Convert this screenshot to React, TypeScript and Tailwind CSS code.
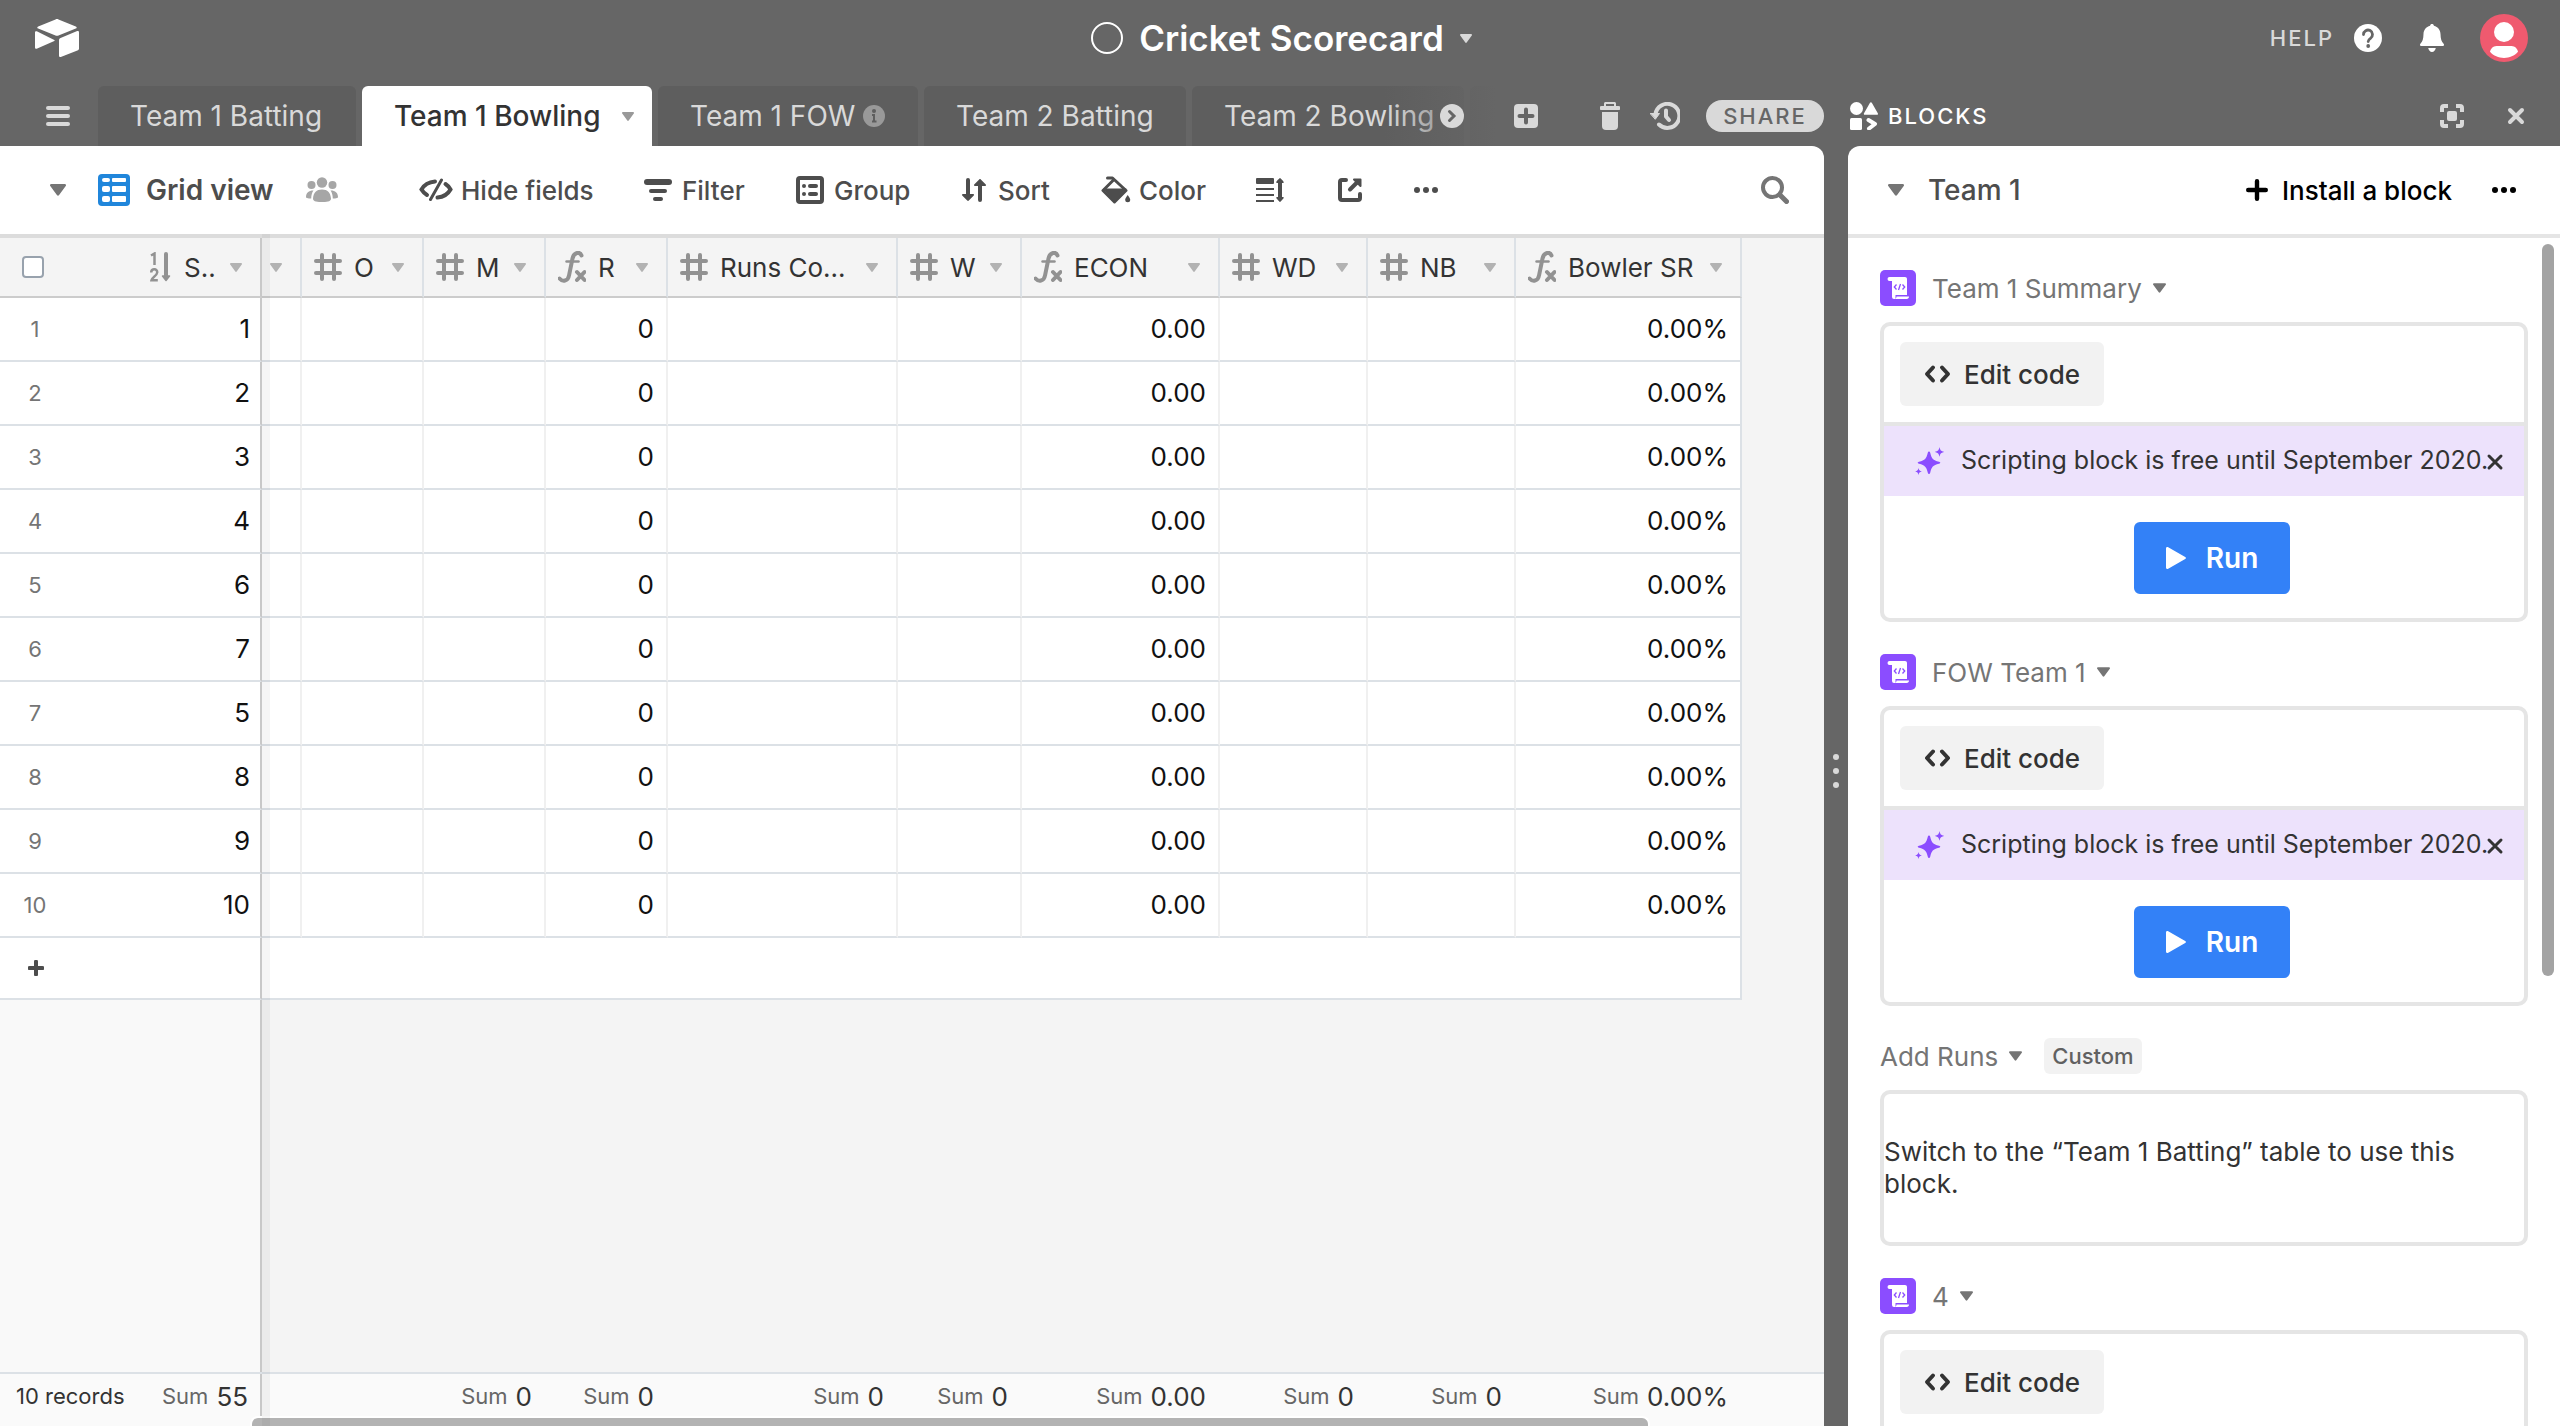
import React, { useState } from 'react'

type IconProps = { className?: string }

const TABS = [
  { name: 'Team 1 Batting', width: 'w-[258px]' },
  { name: 'Team 1 Bowling', width: 'w-[290px]' },
  { name: 'Team 1 FOW', width: 'w-[260px]', info: true },
  { name: 'Team 2 Batting', width: 'w-[262px]' },
  { name: 'Team 2 Bowling', width: 'w-[272px]' },
]

const COLUMNS = [
  { name: 'O', type: 'number', width: 'w-[122px]', value: '', sum: '' },
  { name: 'M', type: 'number', width: 'w-[122px]', value: '', sum: '0' },
  { name: 'R', type: 'formula', width: 'w-[122px]', value: '0', sum: '0' },
  { name: 'Runs Co...', type: 'number', width: 'w-[230px]', value: '', sum: '0' },
  { name: 'W', type: 'number', width: 'w-[124px]', value: '', sum: '0' },
  { name: 'ECON', type: 'formula', width: 'w-[198px]', value: '0.00', sum: '0.00' },
  { name: 'WD', type: 'number', width: 'w-[148px]', value: '', sum: '0' },
  { name: 'NB', type: 'number', width: 'w-[148px]', value: '', sum: '0' },
  { name: 'Bowler SR', type: 'formula', width: 'w-[226px]', value: '0.00%', sum: '0.00%' },
]

const RECORDS = [1, 2, 3, 4, 6, 7, 5, 8, 9, 10]

// ICONS

const Caret: React.FC<IconProps> = ({ className }) => (
  <svg viewBox="0 0 12 9" fill="currentColor" className={`shrink-0 ${className ?? ''}`}>
    <path d="M.9 0h10.2c.8 0 1.200.9.7 1.500L6.700 8.500c-.4.500-1 .5-1.400 0L.2 1.500C-.3.900.1 0 .9 0z" />
  </svg>
)

const Logo = () => (
  <svg width="44" height="38" viewBox="0 0 44 38" fill="#fff">
    <path d="M20.500.4 3.200 7.500c-1.200.5-1.200 1.600 0 2.100l17.300 6.900c1 .4 2 .4 3 0l17.300-6.900c1.200-.5 1.200-1.600 0-2.100L23.500.4c-1-.4-2-.4-3 0z" />
    <path d="M24 20.800v15.900c0 1 .9 1.500 1.800 1.200L43 31.200c.6-.3 1-.9 1-1.500V13.300c0-1-.9-1.500-1.800-1.200L25 19.300c-.6.300-1 .9-1 1.500z" />
    <path d="M19.300 20.900 1.800 12.300C.9 11.900 0 12.400 0 13.300v15.300c0 .9.900 1.500 1.700 1.100l17.600-7.800c.5-.2.500-.8 0-1z" />
  </svg>
)

const HelpIcon = () => (
  <svg width="28" height="28" viewBox="0 0 28 28">
    <circle cx="14" cy="14" r="14" fill="#fff" />
    <path d="M9.500 10.500a4.500 4.500 0 1 1 7 3.800c-1.500 1-2.300 1.700-2.300 3.200" fill="none" stroke="#666" strokeWidth="2.800" strokeLinecap="round" />
    <circle cx="14.200" cy="22" r="1.900" fill="#666" />
  </svg>
)

const BellIcon = () => (
  <svg width="24" height="28" viewBox="0 0 24 28" fill="#fff">
    <path d="M12 0c1.100 0 1.800.7 1.900 1.700C18 2.700 20.400 6 20.500 10c.1 5 1 7.600 3.100 9.800.9 1 .2 2.200-1 2.200H1.400c-1.200 0-1.900-1.200-1-2.200C2.500 17.600 3.400 15 3.500 10c.1-4 2.500-7.300 6.600-8.300C10.200.7 10.900 0 12 0zM8.200 24h7.600c-.4 2.300-1.900 4-3.800 4s-3.400-1.700-3.800-4z" />
  </svg>
)

const AvatarIcon = () => (
  <svg width="48" height="48" viewBox="0 0 48 48">
    <circle cx="24" cy="24" r="24" fill="#ef5a6f" />
    <circle cx="24" cy="18" r="10" fill="#fff" />
    <path d="M16.500 32h15c3.500 0 6 2.800 6.500 5.800C34.500 41.800 29.500 44 24 44s-10.500-2.200-14-6.200c.5-3 3-5.800 6.500-5.800z" fill="#fff" />
  </svg>
)

const InfoIcon = () => (
  <svg width="22" height="22" viewBox="0 0 22 22">
    <circle cx="11" cy="11" r="11" fill="#999" />
    <circle cx="11" cy="6" r="2" fill="#5e5e5e" />
    <path d="M9 10h2v6M9 16.500h4.500" fill="none" stroke="#5e5e5e" strokeWidth="2" />
  </svg>
)

const ChevronCircle = () => (
  <svg width="24" height="24" viewBox="0 0 24 24">
    <circle cx="12" cy="12" r="12" fill="#d9d9d9" />
    <path d="m9.500 7.500 4.500 4.500-4.500 4.500" fill="none" stroke="#666" strokeWidth="3" strokeLinecap="round" />
  </svg>
)

const AddTableIcon = () => (
  <svg width="24" height="24" viewBox="0 0 24 24">
    <rect width="24" height="24" rx="4" fill="#d9d9d9" />
    <path d="M12 5.500v13M5.500 12h13" stroke="#666" strokeWidth="4" strokeLinecap="round" />
  </svg>
)

const TrashIcon = () => (
  <svg width="20" height="28" viewBox="0 0 20 28" fill="#d9d9d9">
    <path d="M4 4V1.500C4 .7 4.700 0 5.500 0h9c.8 0 1.500.7 1.500 1.500V4h2.500a2 2 0 0 1 0 4h-17a2 2 0 0 1 0-4H4zm2 0h8V2H6v2z" />
    <path d="M2 10h16v14a4 4 0 0 1-4 4H6a4 4 0 0 1-4-4V10z" />
  </svg>
)

const HistoryIcon = () => (
  <svg width="30" height="28" viewBox="0 0 30 28" fill="none" stroke="#d9d9d9" strokeLinecap="round" strokeLinejoin="round">
    <path d="M5.500 12a12 12 0 1 1 3.500 10.500" strokeWidth="4" />
    <path d="M16 8.500v6l3 3.500" strokeWidth="4" />
    <path d="M0.500 11.500h9L5.500 17z" fill="#d9d9d9" strokeWidth="1" />
  </svg>
)

const BlocksIcon = () => (
  <svg width="28" height="28" viewBox="0 0 28 28" fill="#fff">
    <circle cx="6.500" cy="6.500" r="6.500" />
    <path d="M20 .8c.4-.8 1.400-.8 1.800 0l6 10.500c.4.800 0 1.500-.8 1.500H14.800c-.8 0-1.200-.7-.8-1.500z" />
    <rect y="16" width="12" height="12" rx="1.500" />
    <path d="m18.500 18 6.500 4-6 4.500" fill="none" stroke="#fff" strokeWidth="4" strokeLinecap="round" strokeLinejoin="round" />
  </svg>
)

const ExpandIcon = () => (
  <svg width="24" height="24" viewBox="0 0 24 24" fill="none" stroke="#d9d9d9">
    <path d="M2 8V4a2 2 0 0 1 2-2h4M16 2h4a2 2 0 0 1 2 2v4M22 16v4a2 2 0 0 1-2 2h-4M8 22H4a2 2 0 0 1-2-2v-4" strokeWidth="4" />
    <rect x="7" y="7" width="10" height="10" rx="2" fill="#d9d9d9" stroke="none" />
  </svg>
)

const CloseIcon: React.FC<IconProps> = ({ className }) => (
  <svg width="18" height="18" viewBox="0 0 18 18" fill="none" stroke="currentColor" strokeLinecap="round" className={className}>
    <path d="m3 3 12 12M15 3 3 15" />
  </svg>
)

const GridIcon = () => (
  <svg width="32" height="32" viewBox="0 0 32 32">
    <rect width="32" height="32" rx="4" fill="#2086db" />
    <g fill="#fff">
      <rect x="4" y="4" width="8" height="4" rx="2" />
      <rect x="14" y="4" width="14" height="4" rx="1" />
      <rect x="4" y="12" width="8" height="6" rx="2" />
      <rect x="14" y="12" width="14" height="6" rx="1" />
      <rect x="4" y="22" width="8" height="6" rx="2" />
      <rect x="14" y="22" width="14" height="6" rx="1" />
    </g>
  </svg>
)

const PeopleIcon = () => (
  <svg width="32" height="26" viewBox="0 0 32 26" fill="#a6a6a6">
    <circle cx="16" cy="5.500" r="5.200" />
    <circle cx="5.500" cy="8" r="4" />
    <circle cx="26.500" cy="8" r="4" />
    <path d="M16 12.500c5.500 0 8.500 3 9 9 .1 1.700-1.500 2.700-3 3-4 .8-8 .8-12 0-1.500-.3-3.100-1.300-3-3 .5-6 3.500-9 9-9z" />
    <path d="M7.500 13.500C6 15.500 5.300 18 5.200 21.500c-1.600 0-3-.1-4.200-.5-.7-.2-1-.8-1-1.600.3-3.600 2.700-6 7.500-5.900zM24.500 13.500c1.500 2 2.200 4.500 2.300 8 1.600 0 3-.1 4.200-.5.7-.2 1-.8 1-1.600-.3-3.600-2.700-6-7.500-5.900z" />
  </svg>
)

const HideIcon = () => (
  <svg width="34" height="24" viewBox="0 0 34 24" fill="none" stroke="#4d4d4d" strokeLinecap="round">
    <path d="M16 3.500C10 4 5 7 2.500 11.500c1.500 2.500 3 4 5.500 5.500" strokeWidth="4" />
    <path d="M26.500 6c2.200 1.400 3.700 3 5 5.500-2.500 4.500-7 7.500-13 8" strokeWidth="4" />
    <path d="M22.500 2 11.500 21.500" strokeWidth="3" />
  </svg>
)

const FilterIcon = () => (
  <svg width="28" height="22" viewBox="0 0 28 22" fill="#4d4d4d">
    <rect width="28" height="6" rx="3" />
    <rect x="5" y="10" width="18" height="4" rx="2" />
    <rect x="9" y="18" width="10" height="4" rx="2" />
  </svg>
)

const GroupIcon = () => (
  <svg width="28" height="28" viewBox="0 0 28 28" fill="#4d4d4d">
    <rect x="2" y="2" width="24" height="24" rx="2" fill="none" stroke="#4d4d4d" strokeWidth="4" />
    <rect x="6" y="8" width="4" height="4" rx="2" />
    <rect x="12" y="8" width="10" height="4" rx="2" />
    <rect x="6" y="16" width="4" height="4" rx="2" />
    <rect x="12" y="16" width="10" height="4" rx="2" />
  </svg>
)

const SortIcon = () => (
  <svg width="24" height="24" viewBox="0 0 24 24" fill="#4d4d4d">
    <path d="M4 2a2 2 0 0 1 4 0v14h3.200c.8 0 1.100.8.6 1.400l-5 5.200c-.4.500-1.100.5-1.600 0l-5-5.200C-.3 16.800.1 16 .9 16H4zM16 22a2 2 0 0 0 4 0V8h3.200c.8 0 1.100-.8.600-1.400l-5-5.200c-.4-.5-1.100-.5-1.600 0l-5 5.200c-.5.600-.1 1.400.7 1.400H16z" />
  </svg>
)

const ColorIcon = () => (
  <svg width="30" height="28" viewBox="0 0 30 28">
    <path d="M6.500 2h5L25 14.500 13.500 26 2 14.500 12 4.500" fill="none" stroke="#4d4d4d" strokeWidth="3" strokeLinejoin="round" strokeLinecap="round" />
    <path d="M2 12.500h23.500L13.500 26z" fill="#4d4d4d" />
    <path d="M26.700 19c1.500 2 2.500 3.500 2.500 4.800a2.500 2.500 0 0 1-5 0c0-1.300 1-2.800 2.500-4.800z" fill="#4d4d4d" />
  </svg>
)

const RowHeightIcon = () => (
  <svg width="28" height="24" viewBox="0 0 28 24" fill="#4d4d4d">
    <rect width="18" height="6" rx="1" />
    <rect y="10" width="18" height="2" />
    <rect y="16" width="18" height="2" />
    <rect y="22" width="18" height="2" />
    <path d="M24 0c.4 0 3.800 3.600 3.800 4.200S27.500 5 27 5h-1v14h1c.5 0 .8.200.8.800S24.400 24 24 24s-3.800-3.600-3.800-4.200.3-.8.800-.8h1V5h-1c-.5 0-.8-.2-.8-.8S23.600 0 24 0z" />
  </svg>
)

const ShareViewIcon = () => (
  <svg width="24" height="24" viewBox="0 0 24 24" fill="none" stroke="#4d4d4d" strokeWidth="4" strokeLinecap="round" strokeLinejoin="round">
    <path d="M8 2H4a2 2 0 0 0-2 2v16a2 2 0 0 0 2 2h16a2 2 0 0 0 2-2v-4" />
    <path d="m12 11.500 6.500-6.500" />
    <path d="M16 1.500h6.500V8z" strokeWidth="2" fill="#4d4d4d" />
  </svg>
)

const DotsIcon: React.FC<IconProps> = ({ className }) => (
  <svg width="24" height="6" viewBox="0 0 24 6" fill="currentColor" className={className}>
    <circle cx="3" cy="3" r="3" />
    <circle cx="12" cy="3" r="3" />
    <circle cx="21" cy="3" r="3" />
  </svg>
)

const SearchIcon = () => (
  <svg width="28" height="28" viewBox="0 0 28 28" fill="none" stroke="#757575" strokeLinecap="round">
    <circle cx="11.500" cy="11.500" r="9.500" strokeWidth="4" />
    <path d="m19 19 6.500 6.500" strokeWidth="5" />
  </svg>
)

const NumberIcon = () => (
  <svg width="28" height="28" viewBox="0 0 28 28" fill="none" stroke="#929292" strokeWidth="4" strokeLinecap="round" className="shrink-0">
    <path d="M8 2v24M20 2v24M2 8h24M2 20h24" />
  </svg>
)

const FormulaIcon = () => (
  <svg width="28" height="32" viewBox="0 0 28 32" fill="none" stroke="#929292" strokeLinecap="round" className="shrink-0">
    <path d="M23.500 4.500C22 .5 16 .8 14.500 7.500L11 24.500c-1 6-6.500 6.500-9.500 3" strokeWidth="4" />
    <path d="M8.500 10.500h12" strokeWidth="2.500" />
    <path d="m19 21 7.500 8M26.500 21 19 29" strokeWidth="4" />
  </svg>
)

const AutonumberIcon = () => (
  <svg width="22" height="30" viewBox="0 0 22 30" fill="none" stroke="#929292" strokeWidth="2.500" className="shrink-0">
    <path d="M1 3.500 4.500 1.500V13" />
    <path d="M1.200 20.500c.2-4.500 6.300-4 6 0C7 23.500 2 25.500 1.500 28.200h6.300" />
    <path d="M16 2v22" strokeWidth="4" strokeLinecap="round" />
    <path d="M12.500 24h7L16 28.500z" fill="#929292" strokeWidth="1.500" strokeLinejoin="round" />
  </svg>
)

const PlusIcon: React.FC<IconProps> = ({ className }) => (
  <svg viewBox="0 0 20 20" stroke="currentColor" strokeLinecap="round" className={className}>
    <path d="M10 2v16M2 10h16" />
  </svg>
)

const ScriptIcon = () => (
  <svg width="36" height="36" viewBox="0 0 36 36">
    <rect width="36" height="36" rx="5" fill="#8b4dff" />
    <path d="M9.500 7H25c1.200 0 2 .8 2 2v16H15.500v4H14a2 2 0 0 1-2-2V11H9.500a2 2 0 0 1 0-4z" fill="#fff" />
    <path d="M16.500 26.500H29c0 1.500-.8 2.500-2.300 2.500H14.500c1.200 0 2-1 2-2.500z" fill="#fff" />
    <path d="m16.500 14.500-2.200 2.500 2.200 2.500M22.500 14.500l2.200 2.500-2.200 2.500M20.500 14l-2 6" fill="none" stroke="#8b4dff" strokeWidth="1.300" />
  </svg>
)

const CodeIcon = () => (
  <svg width="28" height="20" viewBox="0 0 28 20" fill="none" stroke="#333" strokeWidth="4" strokeLinecap="round" strokeLinejoin="round">
    <path d="M9 3.500 3 10l6 6.500M18 3.500l6 6.500-6 6.500" />
  </svg>
)

const SparkleIcon = () => (
  <svg width="30" height="28" viewBox="0 0 30 28" fill="#8b4dff" className="shrink-0">
    <path d="M14 4.500c.6 0 1 .4 1.200 1.200 1.500 6 2.600 7.400 8.800 9 .9.200 1.300.5 1.300 1s-.4.800-1.300 1c-6.200 1.600-7.300 3-8.800 9.100-.2.800-.6 1.200-1.200 1.200s-1-.4-1.200-1.200c-1.500-6-2.600-7.500-8.800-9.100-.9-.2-1.300-.5-1.300-1s.4-.8 1.300-1c6.200-1.600 7.300-3 8.800-9 .2-.8.600-1.200 1.200-1.200z" />
    <path d="M24.500 0c.8 3.400 1.200 4 4.800 4.900-3.600.9-4 1.500-4.800 4.900-.8-3.400-1.200-4-4.800-4.900 3.600-.9 4-1.500 4.800-4.900zM3.500 21c.6 2.300.9 2.800 3.400 3.500-2.500.6-2.800 1.100-3.400 3.500-.6-2.400-.9-2.900-3.400-3.500 2.500-.7 2.800-1.200 3.400-3.500z" />
  </svg>
)

const PlayIcon = () => (
  <svg width="20" height="22" viewBox="0 0 20 22" fill="#fff">
    <path d="M0 1.500C0 .2 1.100-.4 2.200.3l17 9.700c1 .6 1 1.400 0 2l-17 9.700C1.100 22.400 0 21.800 0 20.500z" />
  </svg>
)

// TOP BAR

const TopBar = () => (
  <header className="grid h-[86px] shrink-0 grid-cols-[1fr_auto_1fr] items-center pb-[10px] pl-[35px] pr-8">
    <a href="#home" aria-label="Home" className="justify-self-start">
      <Logo />
    </a>
    <button className="flex items-center gap-4 text-[35px] font-semibold leading-10 text-white">
      <span className="size-8 rounded-full border-2 border-white" />
      <span>Cricket Scorecard</span>
      <Caret className="h-[9px] w-3 text-[#d9d9d9]" />
    </button>
    <div className="flex items-center justify-self-end">
      <button className="mr-[38px] flex items-center gap-5 text-[22px] font-medium tracking-[2px] text-[#d9d9d9]">
        HELP
        <HelpIcon />
      </button>
      <button aria-label="Notifications" className="mr-9">
        <BellIcon />
      </button>
      <button aria-label="Account">
        <AvatarIcon />
      </button>
    </div>
  </header>
)

const TabBar: React.FC<{ active: string; onSelect: (name: string) => void }> = ({ active, onSelect }) => (
  <div className="flex h-[60px] shrink-0">
    <div className="flex min-w-0 flex-1 items-center">
      <button aria-label="All tables" className="ml-[46px] mr-7 flex w-6 shrink-0 flex-col gap-1">
        <span className="h-1 rounded-full bg-[#d9d9d9]" />
        <span className="h-1 rounded-full bg-[#d9d9d9]" />
        <span className="h-1 rounded-full bg-[#d9d9d9]" />
      </button>
      <nav className="relative flex h-full min-w-0 flex-1 gap-[6px] overflow-hidden text-[28px]">
        {TABS.map(tab => (
          <button
            key={tab.name}
            onClick={() => onSelect(tab.name)}
            className={`flex h-full shrink-0 items-center whitespace-nowrap rounded-t-[6px] pl-8 ${tab.width}
              ${active === tab.name ? 'bg-white font-medium text-[#333]' : 'bg-[#5e5e5e] text-[#d9d9d9]'}`}
          >
            {tab.name}
            {active === tab.name && <Caret className="ml-auto mr-[18px] h-[9px] w-3 text-[#999]" />}
            {tab.info && <span className="ml-auto mr-[33px]"><InfoIcon /></span>}
          </button>
        ))}
        <span className="h-full flex-1 rounded-tl-[6px] bg-[#5e5e5e]" />
        <span className="absolute right-0 top-0 h-full w-28 bg-linear-to-r from-transparent to-[#666]" />
        <button aria-label="More tables" className="absolute right-8 top-[18px]">
          <ChevronCircle />
        </button>
      </nav>
      <button aria-label="Add table" className="ml-[18px]"><AddTableIcon /></button>
      <button aria-label="Trash" className="ml-[62px]"><TrashIcon /></button>
      <button aria-label="History" className="ml-[30px]"><HistoryIcon /></button>
      <button className="ml-[26px] h-8 w-[118px] rounded-full bg-[#d9d9d9] text-[22px] font-medium leading-8 tracking-[2px] text-[#666]">
        SHARE
      </button>
    </div>
    <div className="flex w-[736px] shrink-0 items-center pl-[26px] pr-[35px]">
      <BlocksIcon />
      <span className="ml-[10px] text-[22px] font-medium tracking-[2px] text-white">BLOCKS</span>
      <button aria-label="Full screen" className="ml-auto"><ExpandIcon /></button>
      <button aria-label="Close blocks" className="ml-[43px] text-[#d9d9d9]"><CloseIcon className="stroke-4" /></button>
    </div>
  </div>
)

// GRID

const ViewBar = () => (
  <div className="flex h-[88px] shrink-0 items-center pl-[50px] pr-[35px] text-[26px] font-medium text-[#4d4d4d]">
    <button aria-label="Toggle views"><Caret className="h-3 w-4 text-[#757575]" /></button>
    <button className="ml-8 flex w-[176px] items-center gap-4 whitespace-nowrap text-[28px] font-semibold">
      <GridIcon />
      Grid view
    </button>
    <button aria-label="Collaborators" className="ml-8"><PeopleIcon /></button>
    <button className="ml-[81px] flex w-[177px] items-center gap-2 whitespace-nowrap"><HideIcon />Hide fields</button>
    <button className="ml-12 flex w-[104px] items-center gap-[10px]"><FilterIcon />Filter</button>
    <button className="ml-12 flex w-[118px] items-center gap-[10px]"><GroupIcon />Group</button>
    <button className="ml-12 flex w-[91px] items-center gap-3"><SortIcon />Sort</button>
    <button className="ml-12 flex w-[107px] items-center gap-2"><ColorIcon />Color</button>
    <button aria-label="Row height" className="ml-12"><RowHeightIcon /></button>
    <button aria-label="Share view" className="ml-[54px]"><ShareViewIcon /></button>
    <button aria-label="More options" className="ml-[52px]"><DotsIcon /></button>
    <button aria-label="Search" className="ml-auto"><SearchIcon /></button>
  </div>
)

const GridTable = () => (
  <table className="w-[1742px] table-fixed border-separate border-spacing-0 text-[26px] text-[#111]">
    <colgroup>
      <col className="w-[138px]" />
      <col className="w-[124px]" />
      <col className="w-10" />
      {COLUMNS.map(col => <col key={col.name} className={col.width} />)}
    </colgroup>
    <thead className="bg-[#f4f4f4] text-[#333]">
      <tr>
        <th className="h-[60px] border-b-2 border-[#ccc] p-0 pl-[22px] text-left">
          <input
            type="checkbox"
            aria-label="Select all records"
            className="block size-[22px] appearance-none rounded-[4px] border-2 border-[#98a2ad] bg-white"
          />
        </th>
        <th className="border-b-2 border-r-2 border-b-[#ccc] border-r-[#c8c8c8] p-0 pl-3 pr-[18px] font-normal">
          <div className="flex items-center">
            <AutonumberIcon />
            <span className="ml-3 w-[31px] overflow-hidden whitespace-nowrap text-left">S...</span>
            <Caret className="ml-auto h-[9px] w-3 text-[#b2b2b2]" />
          </div>
        </th>
        <th className="border-b-2 border-r-2 border-b-[#ccc] border-r-[#dce1e6] p-0 pr-[18px]">
          <Caret className="ml-auto h-[9px] w-3 text-[#b2b2b2]" />
        </th>
        {COLUMNS.map(col => (
          <th key={col.name} className="border-b-2 border-r-2 border-b-[#ccc] border-r-[#dce1e6] p-0 pl-3 pr-[18px] font-normal">
            <div className="flex items-center gap-3 whitespace-nowrap">
              {col.type === 'number' ? <NumberIcon /> : <FormulaIcon />}
              {col.name}
              <Caret className="ml-auto h-[9px] w-3 text-[#b2b2b2]" />
            </div>
          </th>
        ))}
      </tr>
    </thead>
    <tbody className="bg-white">
      {RECORDS.map((record, index) => (
        <tr key={record}>
          <td className="h-16 border-b-2 border-[#dce1e6] p-0 text-[22px] text-[#757575]">
            <span className="block w-[70px] text-center">{index + 1}</span>
          </td>
          <td className="border-b-2 border-r-2 border-b-[#dce1e6] border-r-[#c8c8c8] p-0 pb-[2px] pr-[10px] text-right">{record}</td>
          <td className="border-b-2 border-r-2 border-b-[#dce1e6] border-r-[#f0f0f0] p-0" />
          {COLUMNS.map(col => (
            <td key={col.name} className="border-b-2 border-r-2 border-b-[#dce1e6] border-r-[#f0f0f0] p-0 pb-[2px] pr-3 text-right last:border-r-[#dce1e6]">
              {col.value}
            </td>
          ))}
        </tr>
      ))}
      <tr>
        <td colSpan={2} className="h-[62px] border-b-2 border-r-2 border-b-[#dce1e6] border-r-[#c8c8c8] p-0">
          <button aria-label="Add record" className="ml-7 block text-[#4d4d4d]"><PlusIcon className="size-4 stroke-5" /></button>
        </td>
        <td colSpan={10} className="border-b-2 border-r-2 border-[#dce1e6] p-0" />
      </tr>
    </tbody>
  </table>
)

const Sum: React.FC<{ value: string }> = ({ value }) => (
  <>
    <span className="text-[22px] text-[#666]">Sum</span>
    <span className="text-[26px] text-[#333]">{value}</span>
  </>
)

const SummaryBar = () => (
  <div className="relative flex h-[54px] shrink-0 border-t-2 border-[#dce1e6] bg-[#fafafa] pb-2">
    <div className="flex w-[262px] shrink-0 items-center gap-2 border-r-2 border-[#c8c8c8] pl-4 pr-3">
      <span className="mr-auto whitespace-nowrap text-[22px] text-[#333]">10 records</span>
      <Sum value="55" />
    </div>
    <div className="w-10 shrink-0" />
    {COLUMNS.map(col => (
      <div key={col.name} className={`flex shrink-0 items-center justify-end gap-2 pr-[14px] ${col.width}`}>
        {col.sum && <Sum value={col.sum} />}
      </div>
    ))}
    <span className="absolute bottom-0 left-[250px] h-[10px] w-[1400px] rounded-t-lg border-2 border-b-0 border-white bg-[#b3b3b3]" />
  </div>
)

// BLOCKS

const BlockTitle: React.FC<{ name: string; custom?: boolean }> = ({ name, custom }) => (
  <div className="flex h-9 items-center text-[26px] text-[#757575]">
    {!custom && <span className="mr-4"><ScriptIcon /></span>}
    <button className="flex items-center gap-[11px]">
      {name}
      <Caret className="h-[10px] w-[13px]" />
    </button>
    {custom && (
      <span className="ml-[22px] rounded-[6px] bg-[#f2f2f2] px-2 text-[22px] font-medium leading-9 text-[#616161]">Custom</span>
    )}
  </div>
)

const ScriptBlock: React.FC<{ name: string }> = ({ name }) => (
  <section className="mb-8">
    <BlockTitle name={name} />
    <div className="mt-4 h-[300px] overflow-hidden rounded-[10px] border-4 border-[#e5e5e5]">
      <div className="border-b-4 border-[#e5e5e5] p-4">
        <button className="flex h-16 w-[204px] items-center gap-3 whitespace-nowrap rounded-[6px] bg-[#f2f2f2] pl-6 text-[26px] font-medium text-[#333]">
          <CodeIcon />
          Edit code
        </button>
      </div>
      <div className="relative flex h-[70px] items-center gap-4 whitespace-nowrap bg-[#ede2fc] pl-[31px] text-[25px] text-[#333]">
        <SparkleIcon />
        Scripting block is free until September 2020.
        <button aria-label="Dismiss" className="absolute right-5 top-[27px]"><CloseIcon className="stroke-3" /></button>
      </div>
      <div className="flex justify-center pl-4 pt-[26px]">
        <button className="flex h-[72px] w-[156px] items-center justify-center gap-5 rounded-[6px] bg-[#3381f7] text-[28px] font-semibold text-white">
          <PlayIcon />
          Run
        </button>
      </div>
    </div>
  </section>
)

const BlocksPanel = () => (
  <aside className="relative flex w-[712px] shrink-0 flex-col overflow-hidden rounded-tl-xl bg-white">
    <div className="flex h-[92px] shrink-0 items-center border-b-4 border-[#e5e5e5] pl-10 pr-11">
      <button className="flex items-center gap-6 text-[28px] font-medium text-[#4d4d4d]">
        <Caret className="h-3 w-4 text-[#757575]" />
        Team 1
      </button>
      <button className="ml-auto flex items-center gap-[14px] text-[26px] font-medium text-black">
        <PlusIcon className="size-[22px] stroke-4" />
        Install a block
      </button>
      <button aria-label="Dashboard options" className="ml-10 text-black"><DotsIcon /></button>
    </div>
    <div className="min-h-0 flex-1 overflow-hidden pl-8 pr-8 pt-8">
      <ScriptBlock name="Team 1 Summary" />
      <ScriptBlock name="FOW Team 1" />
      <section className="mb-8">
        <BlockTitle name="Add Runs" custom />
        <div className="mt-4 flex h-[156px] items-center rounded-[10px] border-4 border-[#e5e5e5]">
          <p className="text-[26px] leading-8 text-[#333]">Switch to the “Team 1 Batting” table to use this block.</p>
        </div>
      </section>
      <ScriptBlock name="4" />
    </div>
    <span className="absolute right-[6px] top-[98px] h-[732px] w-3 rounded-full bg-[#a3a3a3]" />
  </aside>
)

const App: React.FC = () => {
  const [active, setActive] = useState('Team 1 Bowling')

  return (
    <div className="flex h-screen flex-col overflow-hidden bg-[#666] font-[Inter,'Liberation_Sans',sans-serif]">
      <TopBar />
      <TabBar active={active} onSelect={setActive} />
      <div className="flex min-h-0 flex-1">
        <main className="flex min-w-0 flex-1 flex-col overflow-hidden rounded-tr-xl bg-white">
          <ViewBar />
          <div className="relative flex min-h-0 flex-1 flex-col">
            <div className="flex min-h-0 flex-1 flex-col overflow-hidden border-t-4 border-[#dcdcdc] bg-[#f4f4f4]">
              <GridTable />
              <div className="w-[262px] flex-1 border-r-2 border-[#c8c8c8] bg-[#f9f9f9]" />
            </div>
            <SummaryBar />
            {/* scroll shadow beside the frozen column */}
            <span className="pointer-events-none absolute bottom-0 left-[262px] top-0 w-2 bg-black/4" />
          </div>
        </main>
        <div className="flex w-6 shrink-0 flex-col items-center justify-center gap-2 pb-[30px]">
          <span className="size-[6px] rounded-full bg-[#d9d9d9]" />
          <span className="size-[6px] rounded-full bg-[#d9d9d9]" />
          <span className="size-[6px] rounded-full bg-[#d9d9d9]" />
        </div>
        <BlocksPanel />
      </div>
    </div>
  )
}

export default App
